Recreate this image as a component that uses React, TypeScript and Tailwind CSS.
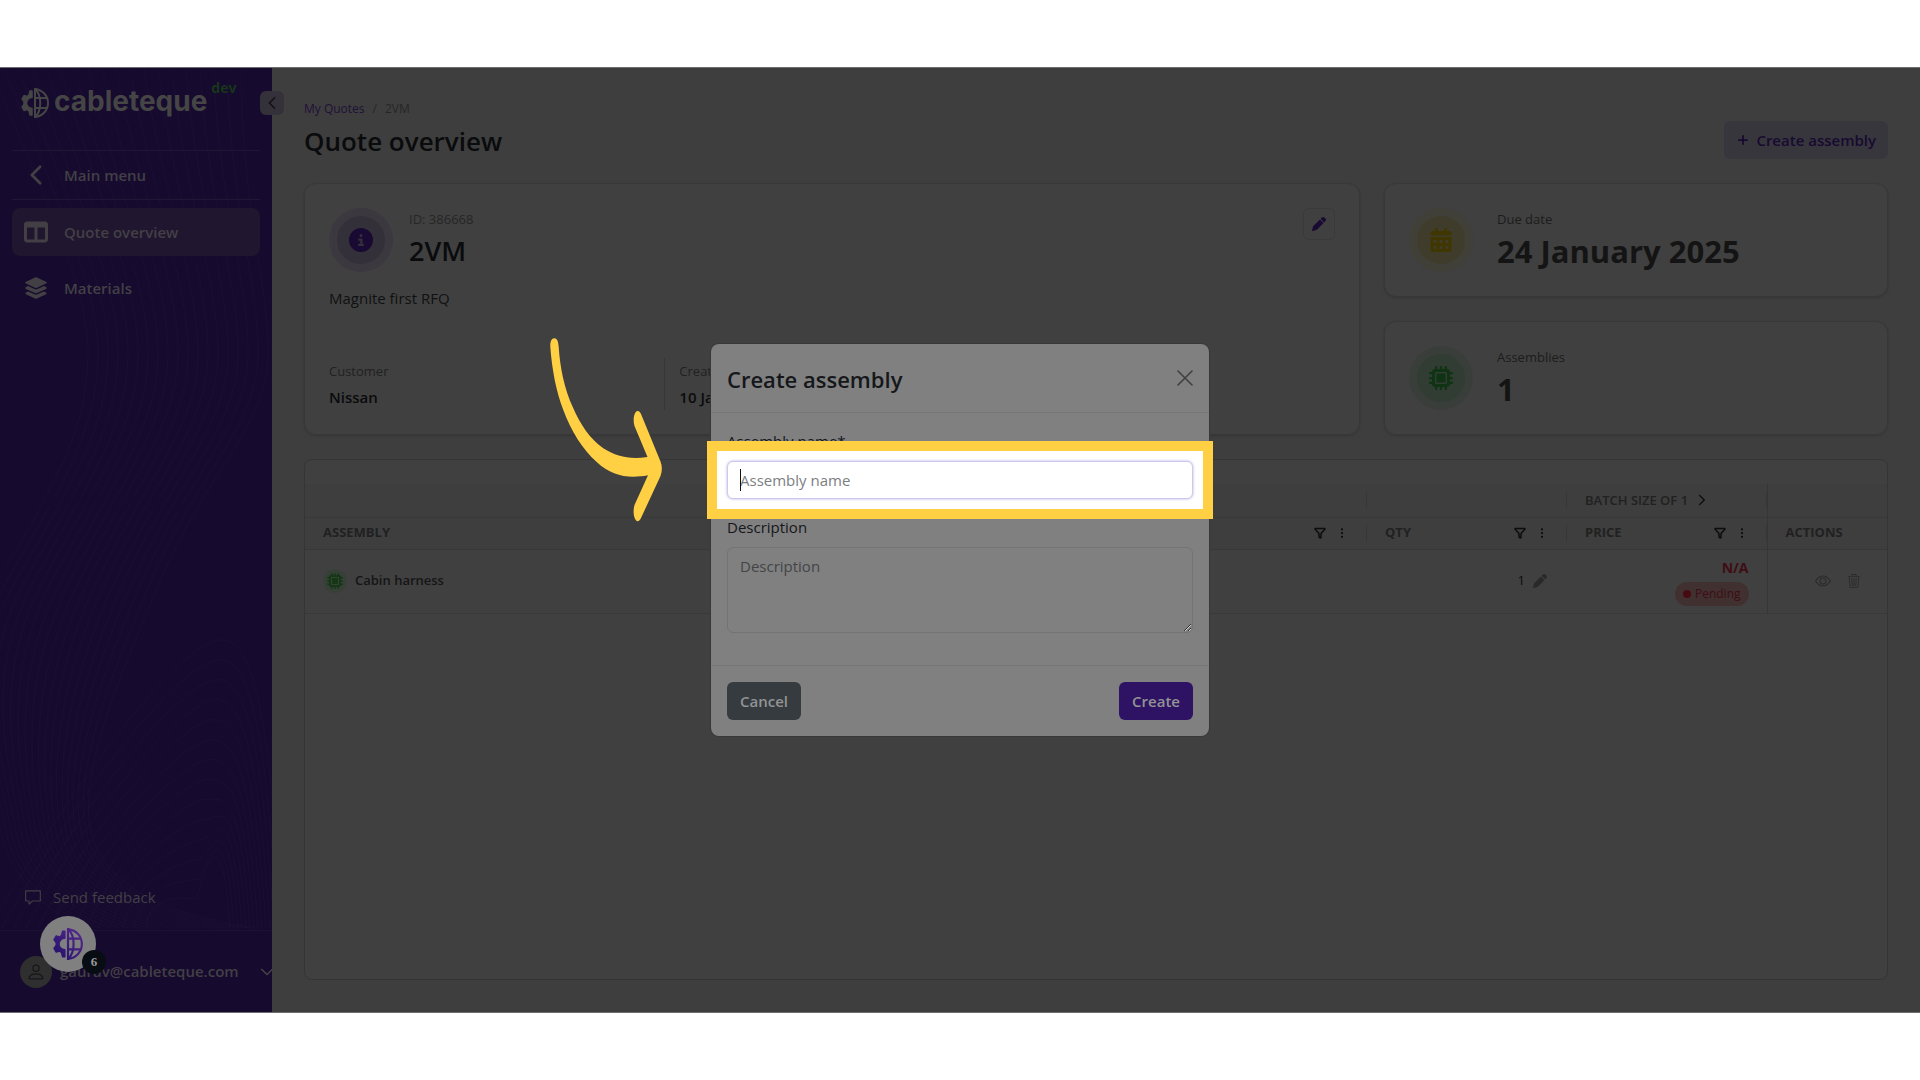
import React from "react"
import { BsChevronDown, BsChevronLeft, BsChevronRight, BsEye, BsPerson, BsThreeDotsVertical, BsTrash3 } from "react-icons/bs"
import { FaCalendarDays, FaCircleInfo, FaLayerGroup, FaMicrochip, FaPen, FaTableColumns } from "react-icons/fa6"
import { VscComment } from "react-icons/vsc"
import { Filter, Plus } from "lucide-react"

function Logo({ className, color }: { className: string; color: string }) {
  return (
    <svg viewBox="0 0 28 30" className={className} aria-hidden="true">
      <defs>
        <linearGradient id="brand" gradientUnits="userSpaceOnUse" x1="0" y1="28" x2="28" y2="0">
          <stop offset="0" stopColor="#1f1068" />
          <stop offset="1" stopColor="#5b2a92" />
        </linearGradient>
      </defs>
      <path
        d="M11 3H9L8 7 6 8.500 3 7.500 1 11 3 13.500V16.500L1 19 3 22.500 6 21.500 8 23 9 27H11V20.500A5.500 5.500 0 0 1 11 9.500Z"
        fill={color}
        stroke={color}
        strokeWidth="1.500"
        strokeLinejoin="round"
      />
      <g fill="none" stroke={color} strokeWidth="2">
        <path d="M14 1V29C22 28 27 22 27 15S22 2 14 1Z" />
        <path d="M14 1C21 7 21 23 14 29" />
        <path d="M14 10H26M14 20H26" />
      </g>
    </svg>
  )
}

// Faint contour lines behind the menu
function SidebarPattern() {
  return (
    <svg
      viewBox="0 0 272 946"
      preserveAspectRatio="none"
      className="absolute inset-0 h-full w-full"
      fill="none"
      stroke="#ffffff"
      strokeOpacity="0.022"
      aria-hidden="true"
    >
      {Array.from({ length: 19 }, (_, i) => (
        <path
          key={i}
          d={`M${i * 14 - 10} 0C${40 + i * 11} 120 ${90 + i * 10} 220 ${88 + i * 10} 290S${60 + i * 8} 410 ${
            i * 9
          } 510S${i * 5 - 10} 700 ${i * 5} 760S${60 + i * 6} 850 ${80 + i * 10} 862`}
        />
      ))}
      {Array.from({ length: 14 }, (_, i) => (
        <path
          key={i}
          d={`M${i * 12 - 10} 862C${70 + i * 6} ${720 + i * 8} ${180 + i} ${573 + i * 20} ${222 - i * 2} ${
            573 + i * 20
          }S${272 - i * 4} 720 ${282 - i * 4} 862`}
        />
      ))}
    </svg>
  )
}

function Sidebar() {
  return (
    <aside className="relative flex w-[272px] shrink-0 flex-col bg-[#160a2e] text-[15px] font-semibold text-[#424045]">
      <SidebarPattern />
      <button
        aria-label="Collapse menu"
        className="absolute top-[23px] -right-3 z-10 flex h-6 w-6 items-center justify-center rounded-md bg-[#35313b] text-[#111111]"
      >
        <BsChevronLeft className="h-[14px] w-[14px]" strokeWidth={1} />
      </button>

      <div className="relative flex items-start px-5 pt-3">
        <Logo className="mt-2 h-[30px] w-[30px]" color="#454545" />
        <span className="ml-1 pt-[6px] font-[Inter] text-[28px] leading-[30px] font-bold text-[#454545]">cableteque</span>
        <span className="ml-1 text-[14px] leading-4 font-bold text-[#17361a]">dev</span>
      </div>

      <nav className="relative mx-3 mt-8 flex flex-col">
        <a href="#menu" className="flex h-[50px] items-center gap-4 border-y border-[#211635] px-3">
          <BsChevronLeft className="h-[22px] w-6" strokeWidth={1} />
          Main menu
        </a>
        <a href="#overview" className="mt-2 flex h-12 items-center gap-4 rounded-lg bg-[#21162f] px-3">
          <FaTableColumns className="h-6 w-6" />
          Quote overview
        </a>
        <a href="#materials" className="mt-2 flex h-12 items-center gap-4 px-3">
          <FaLayerGroup className="h-[22px] w-6" />
          Materials
        </a>
      </nav>

      <button className="relative mt-auto flex items-center gap-[11px] px-6 font-normal">
        <VscComment className="h-[18px] w-[18px]" />
        Send feedback
      </button>
      <div className="relative mt-[22px] flex h-[82px] items-center overflow-hidden border-t border-[#1d1233] pl-5">
        <span className="flex h-8 w-8 shrink-0 items-center justify-center rounded-full bg-[#2f2f30] text-[#17171a]">
          <BsPerson className="h-5 w-5" />
        </span>
        <span className="ml-2 w-[200px] shrink-0">gaurav@cableteque.com</span>
        <BsChevronDown className="h-[14px] w-[14px] shrink-0" strokeWidth={1} />
      </div>

      <button
        aria-label="Open help, 6 new"
        className="absolute bottom-10 left-10 z-20 flex h-14 w-14 items-center justify-center rounded-full bg-[#808080]"
      >
        <Logo className="h-8 w-[30px]" color="url(#brand)" />
        <span className="absolute -right-[10px] -bottom-[2px] flex h-6 w-6 items-center justify-center rounded-full bg-[#080d14] font-['Liberation_Serif'] text-[13px] font-bold text-[#9a9a9a]">
          6
        </span>
      </button>
    </aside>
  )
}

function RoundIcon({ outer, inner, children }: { outer: string; inner: string; children: React.ReactNode }) {
  return (
    <span className={`flex h-16 w-16 shrink-0 items-center justify-center rounded-full ${outer}`}>
      <span className={`flex h-12 w-12 items-center justify-center rounded-full ${inner}`}>{children}</span>
    </span>
  )
}

function StatCard({ label, value, icon }: { label: string; value: string; icon: React.ReactNode }) {
  return (
    <section className="flex gap-6 rounded-xl border border-[#383838] bg-[#404040] p-6 shadow-sm">
      {icon}
      <div>
        <p className="text-[13px] leading-[23px] font-medium text-[#1c1c1c]">{label}</p>
        <p className="text-[31px] leading-10 font-bold text-[#141414]">{value}</p>
      </div>
    </section>
  )
}

function HeadCell({ label, batch }: { label: string; batch?: boolean }) {
  return (
    <div className="flex h-4 items-center border-r border-[#363636] pl-[18px]">
      <span>{label}</span>
      {batch && <BsChevronRight className="ml-2 h-3 w-3 text-[#0c0c0c]" strokeWidth={1} />}
      {label && !batch && (
        <span className="ml-auto flex items-center gap-[10px] pr-[18px] text-[#0c0c0c]">
          <Filter className="h-3 w-3" strokeWidth={3} />
          <BsThreeDotsVertical className="h-3 w-3" />
        </span>
      )}
    </div>
  )
}

function AssemblyTable() {
  return (
    <section className="flex flex-1 flex-col overflow-hidden rounded-lg border border-[#353535] bg-[#404040] pt-6">
      <table className="w-full table-fixed text-left text-[13px]">
        <colgroup>
          <col />
          <col className="w-[200px]" />
          <col className="w-[200px]" />
          <col className="w-[120px]" />
        </colgroup>
        <thead className="bg-[#3e3e3e] text-[#212121]">
          <tr className="h-[33px] border-b border-[#393939]">
            <th className="p-0"><HeadCell label="" /></th>
            <th className="p-0"><HeadCell label="" /></th>
            <th className="p-0 font-semibold"><HeadCell label="BATCH SIZE OF 1" batch /></th>
            <th className="border-l border-[#363636] p-0" />
          </tr>
          <tr className="h-8 border-b border-[#383838]">
            <th className="p-0 font-bold"><HeadCell label="ASSEMBLY" /></th>
            <th className="p-0 font-bold"><HeadCell label="QTY" /></th>
            <th className="p-0 font-bold"><HeadCell label="PRICE" /></th>
            <th className="border-l border-[#363636] p-0 pl-[18px] font-bold">ACTIONS</th>
          </tr>
        </thead>
        <tbody>
          <tr className="h-16 border-b border-[#393939]">
            <td className="p-0 pl-[18px]">
              <a href="#cabin" className="flex items-center gap-2 font-semibold text-[#151515]">
                <span className="flex h-6 w-6 items-center justify-center rounded-full bg-[#374037] text-[#143716]">
                  <FaMicrochip className="h-4 w-4" />
                </span>
                Cabin harness
              </a>
            </td>
            <td className="p-0 pr-5">
              <div className="flex items-center justify-end gap-2 text-[#0c0c0c]">
                1
                <FaPen className="h-[14px] w-[14px] text-[#292929]" />
              </div>
            </td>
            <td className="p-0 pr-[18px]">
              <div className="flex flex-col items-end">
                <span className="text-[14px] leading-6 font-bold text-[#3f0d13]">N/A</span>
                <span className="mt-[2px] flex h-6 items-center gap-1 rounded-full bg-[#403030] px-2 text-[12px] text-[#3f0d13]">
                  <span className="h-2 w-2 rounded-full bg-[#450b11]" />
                  Pending
                </span>
              </div>
            </td>
            <td className="border-l border-[#363636] p-0">
              <div className="flex items-center justify-end gap-4 pr-[26px] text-[#2a2a2a]">
                <button aria-label="View"><BsEye className="h-4 w-4" /></button>
                <button aria-label="Delete"><BsTrash3 className="h-[14px] w-[14px]" /></button>
              </div>
            </td>
          </tr>
        </tbody>
      </table>
    </section>
  )
}

function CreateModal() {
  return (
    <div className="absolute inset-0 z-30 flex items-center justify-center">
      <form
        role="dialog"
        aria-labelledby="modal-title"
        className="relative w-full max-w-[498px] rounded-lg bg-[#808080] text-[15px] text-[#15171a] shadow-[0_0_0_1px_#383838]"
      >
        <header className="flex h-[69px] items-center justify-between border-b border-[#777777] px-4">
          <h2 id="modal-title" className="pt-[2px] text-[22px] font-semibold">Create assembly</h2>
          <button type="button" aria-label="Close" className="text-[#404040]">
            <svg viewBox="0 0 16 16" className="h-4 w-4" stroke="currentColor" strokeWidth="1.600" strokeLinecap="round">
              <path d="M1 1 15 15M15 1 1 15" />
            </svg>
          </button>
        </header>

        <div className="px-4 pt-4 pb-8">
          <label htmlFor="assembly-name" className="block leading-6">Assembly name*</label>
          <div className="relative mt-2">
            {/* Highlighted field */}
            <div className="absolute -inset-x-5 -inset-y-5 border-10 border-[#ffd043] bg-white" />
            <input
              id="assembly-name"
              placeholder="Assembly name"
              className="relative block h-[38px] w-full rounded-md border border-[#cfc8ea] bg-white px-3 shadow-[0_0_2px_1px_#dfdaf3] outline-none placeholder:text-[#7b7e82]"
            />
            <span className="absolute top-2 left-[13px] h-[22px] w-px bg-[#101214]" />
          </div>

          <label htmlFor="description" className="relative mt-4 block leading-6">Description</label>
          <textarea
            id="description"
            placeholder="Description"
            className="mt-2 block h-[86px] w-full rounded-md border border-[#747474] px-3 py-[6px] leading-6 placeholder:text-[#434548]"
          />
        </div>

        <footer className="flex justify-between border-t border-[#777777] p-4 font-semibold text-[#939393]">
          <button type="button" className="h-[38px] rounded-md bg-[#363b40] px-[13px]">Cancel</button>
          <button type="submit" className="h-[38px] rounded-md bg-[#2e1365] px-[13px]">Create</button>
        </footer>

        <svg viewBox="0 0 112 184" className="absolute -top-[6px] -left-[161px] h-[184px] w-28" fill="#ffd043" aria-hidden="true">
          <path d="M4.300.300C1.500.300 0 4 .300 9C2 31 6 53 13.300 72C21 93 33 112 46.700 124C62 138 78 141 98 137.300L84.500 167C82.500 174 84 182 87.300 183.300C89 183.500 90 182 91 180L110.500 138C112.300 133 112.300 128 110.500 123.500L91 76C90 74 89 72.800 87.300 73C84.500 73.500 82.500 81 84.500 88L97.500 119C80 121.500 67 119 53.300 110.300C40 101 30 86 23.300 70.300C14 50 10 29 8.700 8.700C8.300 3 7 .300 4.300.300Z" />
        </svg>
      </form>
    </div>
  )
}

export default function App() {
  return (
    <div className="flex min-h-screen flex-col bg-white py-[67px] font-['Open_Sans',sans-serif]">
      <div className="relative flex flex-1 border-y border-[#6c6c6c] bg-[#3e3e3e]">
        <Sidebar />

        <main className="flex min-w-0 flex-1 flex-col px-8 pt-[31px] pb-8">
          <div className="mb-6 flex items-end justify-between">
            <div>
              <nav className="flex gap-2 text-[12px] leading-5 text-[#262626]">
                <a href="#quotes" className="text-[#211038]">My Quotes</a>
                <span>/</span>
                <span>2VM</span>
              </nav>
              <h1 className="mt-1 text-[26px] leading-9 font-semibold text-[#0a0b0c]">Quote overview</h1>
            </div>
            <button className="flex h-[38px] items-center gap-[6px] rounded-md bg-[#38363d] px-3 text-[15px] font-semibold text-[#170a30]">
              <Plus className="h-[14px] w-[14px]" strokeWidth={3} />
              Create assembly
            </button>
          </div>

          <div className="mb-6 grid grid-cols-[1fr_504px] gap-6">
            <section className="flex flex-col rounded-xl border border-[#383838] bg-[#404040] p-6 shadow-sm">
              <div className="flex items-start gap-4">
                <RoundIcon outer="bg-[#3b383f]" inner="bg-[#343039]">
                  <FaCircleInfo className="h-6 w-6 text-[#180a33]" />
                </RoundIcon>
                <div>
                  <p className="text-[13px] leading-[23px] font-medium text-[#262626]">ID: 386668</p>
                  <p className="text-[27px] leading-10 font-semibold text-[#0a0b0c]">2VM</p>
                </div>
                <button
                  aria-label="Edit quote"
                  className="ml-auto flex h-8 w-8 items-center justify-center rounded-md border border-[#3a3a3a] text-[#180a33]"
                >
                  <FaPen className="h-[14px] w-[14px]" />
                </button>
              </div>
              <p className="mt-[14px] text-[15px] leading-6 text-[#101112]">Magnite first RFQ</p>
              <dl className="mt-auto grid grid-cols-3 leading-[26px]">
                <div>
                  <dt className="text-[13px] text-[#202122]">Customer</dt>
                  <dd className="text-[15px] font-semibold text-[#0a0b0c]">Nissan</dd>
                </div>
                <div className="border-l border-[#363636] pl-[14px]">
                  <dt className="text-[13px] text-[#202122]">Created</dt>
                  <dd className="text-[15px] font-semibold text-[#0a0b0c]">10 Jan</dd>
                </div>
              </dl>
            </section>

            <div className="flex flex-col gap-6">
              <StatCard
                label="Due date"
                value="24 January 2025"
                icon={
                  <RoundIcon outer="bg-[#403f38]" inner="bg-[#403c2c]">
                    <FaCalendarDays className="h-6 w-6 text-[#403600]" />
                  </RoundIcon>
                }
              />
              <StatCard
                label="Assemblies"
                value="1"
                icon={
                  <RoundIcon outer="bg-[#3a3e3a]" inner="bg-[#313c33]">
                    <FaMicrochip className="h-6 w-6 text-[#0f3313]" />
                  </RoundIcon>
                }
              />
            </div>
          </div>

          <AssemblyTable />
        </main>

        <CreateModal />
      </div>
    </div>
  )
}
